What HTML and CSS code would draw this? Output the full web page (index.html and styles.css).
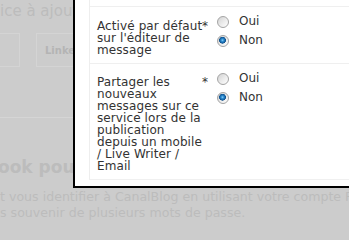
FILE: index.html
```html
<!DOCTYPE html>
<html lang="fr">
<head>
<meta charset="utf-8">
<title>Options</title>
<link rel="stylesheet" href="styles.css">
</head>
<body>
<div class="viewport">
  <div class="page">
    <div class="page-title">ice à ajouter</div>
    <div class="services">
      <div class="svc svc-first"></div>
      <div class="svc"><span class="svc-name">LinkedIn</span></div>
    </div>
    <div class="rule"></div>
    <div class="fb-title">ook pour vous connecter</div>
    <p class="fb-text">t vous identifier à CanalBlog en utilisant votre compte Facebook<br>s souvenir de plusieurs mots de passe.</p>
  </div>

  <div class="dialog">
    <div class="table">
      <div class="row row-prev"></div>
      <div class="row">
        <div class="label"><span class="req">*</span>Activé par défaut sur l'éditeur de message</div>
        <div class="options">
          <label class="opt"><span class="radio"></span>Oui</label>
          <label class="opt"><span class="radio checked"></span>Non</label>
        </div>
      </div>
      <div class="row">
        <div class="label"><span class="req">*</span>Partager les nouveaux messages sur ce service lors de la publication depuis un mobile / Live Writer / Email</div>
        <div class="options">
          <label class="opt"><span class="radio"></span>Oui</label>
          <label class="opt"><span class="radio checked"></span>Non</label>
        </div>
      </div>
    </div>
  </div>
</div>
</body>
</html>
```
FILE: styles.css
```css
html, body {
  margin: 0;
  padding: 0;
  width: 349px;
  height: 226px;
  overflow: hidden;
}
body {
  background: #cccccc;
  font-family: "DejaVu Sans", Verdana, sans-serif;
}
.viewport {
  position: relative;
  width: 349px;
  height: 226px;
  overflow: hidden;
  background: #cccccc;
}

/* page behind the overlay */
.page {
  color: #bcbcbc;
  white-space: nowrap;
}
.page-title {
  font-size: 15px;
  line-height: 18px;
  padding-top: 2px;
}
.services {
  display: flex;
  gap: 16px;
  margin-top: 13px;
  margin-left: -40px;
}
.svc {
  width: 120px;
  height: 32px;
  border: 1px solid #d4d4d4;
  display: flex;
  align-items: center;
  padding-left: 8px;
}
.svc-first {
  width: 50px;
}
.svc-name {
  font-size: 10px;
  font-weight: bold;
  color: #b4b4b4;
}
.rule {
  height: 1px;
  background: #d5d5d5;
  margin-top: 50px;
}
.fb-title {
  font-size: 17px;
  font-weight: bold;
  line-height: 20px;
  margin-top: 39px;
  margin-left: -2px;
}
.fb-text {
  margin: 12px 0 0 0;
  font-size: 12.6px;
  line-height: 16px;
}

/* dialog */
.dialog {
  position: absolute;
  left: 73px;
  top: -20px;
  width: 330px;
  background: #fff;
  border: 2px solid #000;
  padding: 0 0 6px 14px;
}
.table {
  border-left: 1px solid #eeeeee;
  border-bottom: 1px solid #f0f0f0;
}
.row {
  display: flex;
  align-items: flex-start;
  border-top: 1px solid #efefef;
  padding: 7px 0 7px 7px;
  color: #333;
  font-size: 12px;
}
.row-prev {
  border-top: none;
  padding: 0;
  height: 24px;
}
.label {
  width: 111px;
  flex: none;
  margin-top: 5.5px;
  line-height: 12px;
  letter-spacing: 0.1px;
}
.req {
  float: right;
  letter-spacing: 0;
  margin-left: -3px;
}
.options {
  margin-left: 9px;
}
.opt {
  display: flex;
  align-items: flex-start;
  height: 19px;
  line-height: 14px;
}
.radio {
  flex: none;
  width: 12px;
  height: 12px;
  box-sizing: border-box;
  margin-top: 2.4px;
  margin-right: 10px;
  border-radius: 50%;
  border: 1px solid #a4a4a4;
  background: linear-gradient(135deg, #d2d2d2 0%, #ececec 55%, #ffffff 100%);
}
.radio.checked {
  background:
    radial-gradient(circle at 45% 42%, #8fd0f5 0, #2f8fd4 1.3px, #0d4f8c 3.2px, transparent 3.6px),
    linear-gradient(135deg, #d2d2d2 0%, #ececec 55%, #ffffff 100%);
}
```
